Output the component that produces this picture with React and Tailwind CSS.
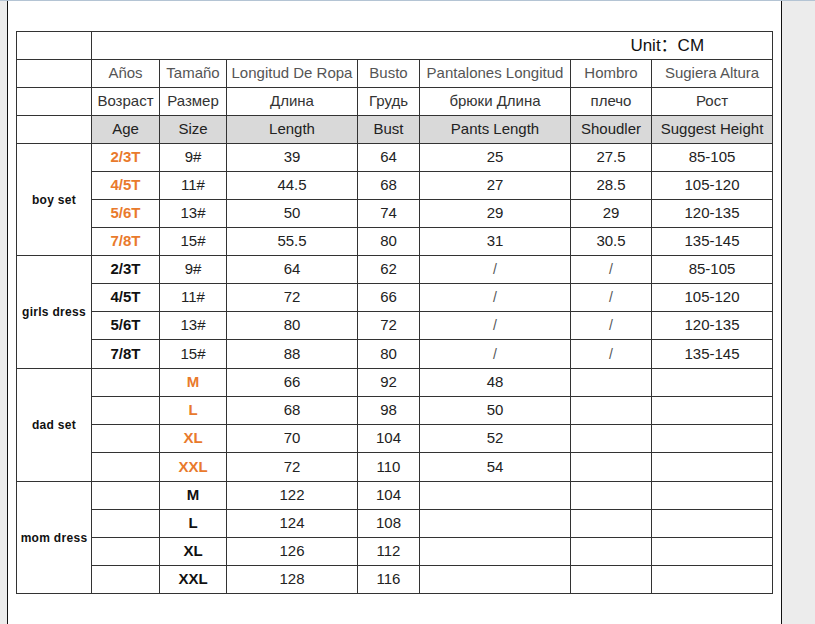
import React from "react";

// Size chart: group label column + seven measurement columns
const COLS = [75, 68, 67, 131, 62, 151, 81, 121];

const HEAD = [
  ["Años", "Tamaño", "Longitud De Ropa", "Busto", "Pantalones Longitud", "Hombro", "Sugiera Altura"],
  ["Возраст", "Размер", "Длина", "Грудь", "брюки Длина", "плечо", "Рост"],
  ["Age", "Size", "Length", "Bust", "Pants Length", "Shoudler", "Suggest Height"],
];

const AGES = ["2/3T", "4/5T", "5/6T", "7/8T"];
const KIDS = ["9#", "11#", "13#", "15#"];
const HEIGHTS = ["85-105", "105-120", "120-135", "135-145"];
const ADULT = ["M", "L", "XL", "XXL"];

const GROUPS = [
  {
    label: "boy set",
    rows: [0, 1, 2, 3].map((i) => ({
      age: AGES[i],
      size: KIDS[i],
      cells: [["39", "44.5", "50", "55.5"][i], ["64", "68", "74", "80"][i], ["25", "27", "29", "31"][i], ["27.5", "28.5", "29", "30.5"][i], HEIGHTS[i]],
    })),
    ageTone: "orange",
  },
  {
    label: "girls dress",
    rows: [0, 1, 2, 3].map((i) => ({
      age: AGES[i],
      size: KIDS[i],
      cells: [["64", "72", "80", "88"][i], ["62", "66", "72", "80"][i], "/", "/", HEIGHTS[i]],
    })),
    ageTone: "black",
    tall: true,
  },
  {
    label: "dad set",
    rows: [0, 1, 2, 3].map((i) => ({
      age: "",
      size: ADULT[i],
      cells: [["66", "68", "70", "72"][i], ["92", "98", "104", "110"][i], ["48", "50", "52", "54"][i], "", ""],
    })),
    sizeTone: "orange",
    tall: true,
  },
  {
    label: "mom dress",
    rows: [0, 1, 2, 3].map((i) => ({
      age: "",
      size: ADULT[i],
      cells: [["122", "124", "126", "128"][i], ["104", "108", "112", "116"][i], "", "", ""],
    })),
    sizeTone: "black",
  },
];

const cell = "border border-[#333] text-center align-middle p-0";
const tone = (t) => (t === "orange" ? "font-bold text-[#e97a2c]" : t === "black" ? "font-bold text-[#111]" : "text-[#222]");

export default function App() {
  return (
    <div
      className="w-[815px] h-[624px] bg-[#ececec] border-t border-[#b4c4d4] flex overflow-hidden"
      style={{ fontFamily: '"Liberation Sans", Arial, "Noto Sans CJK SC", sans-serif' }}
    >
      <div className="ml-[7px] w-[775px] h-full bg-white border-x border-[#111] pl-[8px] pt-[30px]">
        <table className="table-fixed border-collapse w-[757px] border border-[#555]">
          <colgroup>
            {COLS.map((w, i) => (
              <col key={i} style={{ width: w }} />
            ))}
          </colgroup>
          <tbody>
            <tr className="h-[28px]">
              <td className={cell} />
              <td colSpan={7} className={`${cell} text-right pr-[68px] text-[17px] text-[#111]`}>
                Unit：CM
              </td>
            </tr>
            {HEAD.map((row, r) => (
              <tr key={r} className="h-[28px]">
                <td className={cell} />
                {row.map((t, c) => (
                  <td
                    key={c}
                    className={`${cell} text-[15px] whitespace-nowrap ${
                      r === 2 ? "bg-[#d9d9d9] text-[#222]" : r === 0 ? "text-[#555]" : "text-[#333]"
                    }`}
                  >
                    {t}
                  </td>
                ))}
              </tr>
            ))}
            {GROUPS.map((g) =>
              g.rows.map((row, i) => (
                <tr key={g.label + i} className={g.tall && i === 3 ? "h-[29px]" : "h-[28px]"}>
                  {i === 0 && (
                    <td rowSpan={4} className={`${cell} text-[12px] font-bold text-[#111] tracking-[0.3px]`}>
                      {g.label}
                    </td>
                  )}
                  <td className={`${cell} text-[15px] ${tone(g.ageTone)}`}>{row.age}</td>
                  <td className={`${cell} text-[15px] ${tone(g.sizeTone)}`}>{row.size}</td>
                  {row.cells.map((v, c) => (
                    <td key={c} className={`${cell} ${v === "/" ? "text-[14px] text-[#555]" : "text-[15px] text-[#222]"}`}>
                      {v}
                    </td>
                  ))}
                </tr>
              ))
            )}
          </tbody>
        </table>
      </div>
    </div>
  );
}
